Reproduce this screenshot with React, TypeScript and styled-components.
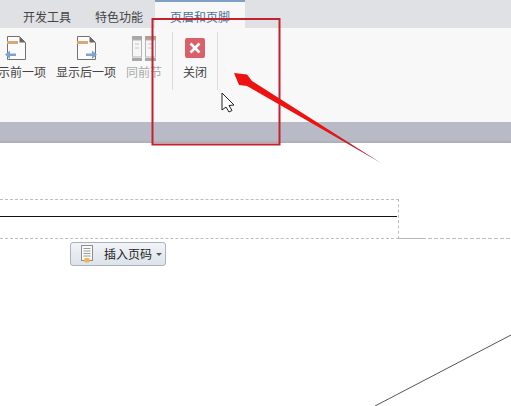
import React from "react";
import styled, { createGlobalStyle } from "styled-components";

const Global = createGlobalStyle`
  html, body { margin: 0; padding: 0; background: #fff; }
  body { font-family: "Noto Sans CJK SC", "Liberation Sans", sans-serif; }
`;
const Page = styled.div`
  position: relative; width: 511px; height: 406px; overflow: hidden; background: #fff;
  display: flex; flex-direction: column;
`;
const TabBar = styled.div`
  height: 28px; flex: none; background: #e0e1e5; display: flex; align-items: stretch; padding-left: 23px;
`;
const Tab = styled.div<{ $active?: boolean; $w: number }>`
  width: ${p => p.$w}px; box-sizing: border-box; font-size: 12px; line-height: 12px;
  color: ${p => (p.$active ? "#4d7298" : "#444")};
  background: ${p => (p.$active ? "#f7f7f8" : "transparent")};
  border-top: ${p => (p.$active ? "2px solid #7f9fc4" : "0")};
  padding-top: ${p => (p.$active ? "9px" : "11px")};
  text-align: ${p => (p.$active ? "center" : "left")};
`;
const Ribbon = styled.div`
  height: 94px; flex: none; background: #f8f8f9; display: flex; align-items: flex-start; margin-left: -14px;
`;
const Tool = styled.div<{ $w: number; $disabled?: boolean }>`
  width: ${p => p.$w}px; flex: none; display: flex; flex-direction: column; align-items: center;
  padding-top: 7px; font-size: 12px; line-height: 14px; white-space: nowrap;
  color: ${p => (p.$disabled ? "#a9a9a9" : "#444")};
  svg { display: block; }
`;
const Sep = styled.div<{ $gap?: number }>`
  width: 1px; height: 58px; margin-top: 4px; margin-left: ${p => p.$gap ?? 0}px; flex: none; background: #dcdcdf;
`;
const Band = styled.div`
  height: 21px; flex: none;
  background: linear-gradient(#b8bbc6, #b8bbc6 85%, #a9acb6);
`;
const Doc = styled.div`
  flex: 1; position: relative; background: #fff;
`;
const HeaderBox = styled.div`
  width: 399px; height: 40px; margin-top: 56px; box-sizing: border-box;
  border-top: 1px dashed #bdbdbd; border-right: 1px dashed #bdbdbd; border-bottom: 1px dashed #bdbdbd;
  padding-top: 16px; padding-right: 1px;
`;
const HeaderRule = styled.div`
  height: 1px; background: #111;
`;
const Tail = styled.div`
  position: absolute; left: 398px; right: 0; top: 95px; height: 1px;
  background: linear-gradient(90deg, #b5b5b5 26px, transparent 26px),
    repeating-linear-gradient(90deg, #bdbdbd 0 4px, transparent 4px 6px);
`;
const PageNumberButton = styled.div`
  width: 96px; height: 24px; margin: 3px 0 0 70px; box-sizing: border-box;
  display: flex; align-items: center;
  border: 1px solid #a9b1bd; border-radius: 3px;
  background: linear-gradient(#f1f4f8, #dde3ea);
  font-size: 12px; color: #222; padding-left: 9px;
  svg { flex: none; }
`;
const ButtonLabel = styled.span`
  margin-left: 10px; line-height: 14px;
`;
const Caret = styled.span`
  margin-left: 4px; width: 0; height: 0; border-left: 3px solid transparent; border-right: 3px solid transparent; border-top: 3px solid #555;
`;
const Overlay = styled.svg`
  position: absolute; left: 0; top: 0; pointer-events: none;
`;

const DocIcon = ({ next }: { next?: boolean }) => (
  <svg width="24" height="30" viewBox="0 0 24 30">
    <path d="M3.500 1.500H15.500L21.500 7.500V24.500H3.500Z" fill="#fbfbfb" stroke="#77706c" strokeWidth="1" />
    <path d="M15.500 1.500L21.500 7.500H15.500Z" fill="#6e6662" />
    <rect x="3" y="6" width="11" height="3" fill="#d8a878" />
    {next ? (
      <path d="M12 18.500H18V15.500L23 19.500L18 24V21H12Z" fill="#7da3d0" />
    ) : (
      <path d="M12 18.500H6V15.500L1 19.500L6 24V21H12Z" fill="#7da3d0" />
    )}
  </svg>
);
const SameIcon = () => (
  <svg width="26" height="30" viewBox="0 0 26 30">
    <rect x="1" y="1" width="10" height="4" fill="#a8a8a8" />
    <rect x="14" y="1" width="11" height="4" fill="#b69a8e" />
    <rect x="1.500" y="5" width="9" height="17" fill="#f6f6f6" stroke="#b5b5b5" />
    <rect x="14.500" y="5" width="10" height="17" fill="#f6f6f6" stroke="#b5b5b5" />
    <path d="M4 9h4M4 13h4M17 9h5M17 13h5" stroke="#c4c4c4" />
    <rect x="1" y="23" width="10" height="3" fill="#a8a8a8" />
    <rect x="14" y="23" width="11" height="3" fill="#a8a8a8" />
  </svg>
);
const CloseIcon = () => (
  <svg width="20" height="30" viewBox="0 0 20 30">
    <rect y="3" width="20" height="20" rx="2" fill="#d9606a" />
    <path d="M5.500 8.500L14.500 17.500M14.500 8.500L5.500 17.500" stroke="#fff" strokeWidth="2.600" />
  </svg>
);
const PageIcon = () => (
  <svg width="14" height="18" viewBox="0 0 14 18">
    <rect x="1.500" y="0.500" width="11" height="15" fill="#fafafa" stroke="#8d8d8d" />
    <path d="M3.500 3.500h7M3.500 6h7M3.500 8.500h7M3.500 11h7" stroke="#9a9a9a" />
    <rect x="4" y="13" width="6" height="4.500" rx="2" fill="#eeb556" />
  </svg>
);

export default function App() {
  return (
    <Page>
      <Global />
      <TabBar>
        <Tab $w={72}>开发工具</Tab>
        <Tab $w={60}>特色功能</Tab>
        <Tab $w={90} $active>页眉和页脚</Tab>
      </TabBar>
      <Ribbon>
        <Tool $w={60}><DocIcon />显示前一项</Tool>
        <Tool $w={80}><DocIcon next />显示后一项</Tool>
        <Tool $w={36} $disabled><SameIcon />同前节</Tool>
        <Sep $gap={10} />
        <Tool $w={44}><CloseIcon />关闭</Tool>
        <Sep />
      </Ribbon>
      <Band />
      <Doc>
        <HeaderBox><HeaderRule /></HeaderBox>
        <Tail />
        <PageNumberButton>
          <PageIcon />
          <ButtonLabel>插入页码</ButtonLabel>
          <Caret />
        </PageNumberButton>
      </Doc>
      <Overlay width="511" height="406" viewBox="0 0 511 406">
        <defs>
          <linearGradient id="shaft" x1="381" y1="163" x2="320" y2="125" gradientUnits="userSpaceOnUse">
            <stop offset="0" stopColor="#9c3040" />
            <stop offset="1" stopColor="#ee1111" />
          </linearGradient>
        </defs>
        <path d="M375 406L511 335" stroke="#555" strokeWidth="1" fill="none" />
        <rect x="152.500" y="19" width="127" height="125.500" fill="none" stroke="#c4202e" strokeWidth="2" />
        <path d="M381 163L252 81L247 74.500L234 73L239 85L247 86Z" fill="url(#shaft)" />
        <path d="M222 93V110L226 107L229 112L232 110.500L229 105.500L234 105Z" fill="#fff" stroke="#222" strokeWidth="1" />
      </Overlay>
    </Page>
  );
}
